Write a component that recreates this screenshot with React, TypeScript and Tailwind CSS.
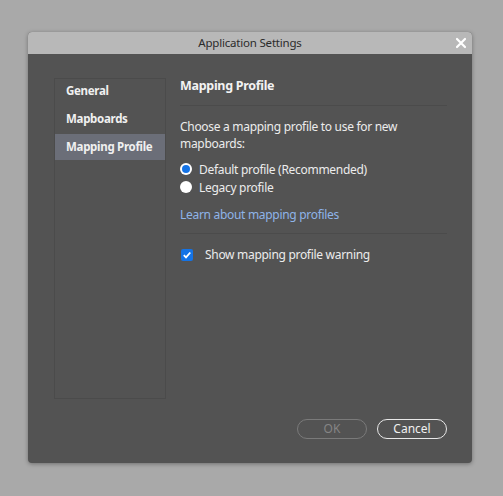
import { useState } from "react";

const font = { fontFamily: "'Noto Sans', 'Open Sans', sans-serif" };

export default function App() {
  const [profile, setProfile] = useState("default");
  const [warn, setWarn] = useState(true);
  const tabs = ["General", "Mapboards", "Mapping Profile"];
  const [tab, setTab] = useState("Mapping Profile");

  return (
    <div className="h-[496px] w-[503px] bg-[#a9a9a9] pl-[28px] pt-[32px]" style={font}>
      <div className="flex h-[431px] w-[444px] flex-col overflow-hidden rounded-[4px] bg-[#535353] shadow-[0_1px_4px_rgba(0,0,0,0.35)]">
        <div className="relative flex h-[22px] items-center justify-center bg-[#b8b8b8] text-[11.5px] tracking-[-0.2px] text-[#2b2b2b]">
          Application Settings
          <button className="absolute right-[5px] top-[5px]">
            <svg width="12" height="12" viewBox="0 0 12 12">
              <path d="M2 2 L10 10 M10 2 L2 10" stroke="#fff" strokeWidth="2.2" strokeLinecap="round" />
            </svg>
          </button>
        </div>

        <div className="flex flex-1 flex-col pb-[24px] pl-[26px] pr-[25px] pt-[24px]">
          <div className="flex flex-1 gap-[14px]">
            <div className="h-[321px] w-[112px] border border-[#4b4b4b]">
              <div className="-mt-[1px] flex flex-col gap-[2px]">
                {tabs.map((t) => (
                  <button
                    key={t}
                    onClick={() => setTab(t)}
                    className={`flex h-[26px] items-center whitespace-nowrap px-[11px] text-left text-[11.5px] font-bold tracking-[-0.3px] text-[#f0f0f0] ${
                      tab === t ? "bg-[#6b6e78]" : ""
                    }`}
                  >
                    {t}
                  </button>
                ))}
              </div>
            </div>

            <div className="flex flex-1 flex-col text-[12px] leading-[17px] tracking-[-0.3px] text-[#ececec]">
              <h2 className="-mt-[1px] text-[12.5px] font-bold tracking-[-0.3px] text-[#f2f2f2]">Mapping Profile</h2>
              <div className="mt-[11px] border-t border-[#4b4b4b]" />
              <p className="mt-[12px]">
                Choose a mapping profile to use for new
                <br />
                mapboards:
              </p>
              <div className="mt-[8px] flex flex-col">
                {[
                  ["default", "Default profile (Recommended)"],
                  ["legacy", "Legacy profile"],
                ].map(([v, label]) => (
                  <label
                    key={v}
                    className="flex h-[18px] cursor-pointer items-center gap-[7px]"
                    onClick={() => setProfile(v)}
                  >
                    <span className="flex h-[12px] w-[12px] items-center justify-center rounded-full bg-white">
                      {profile === v && <span className="h-[8px] w-[8px] rounded-full bg-[#1473e6]" />}
                    </span>
                    <span>{label}</span>
                  </label>
                ))}
              </div>
              <a className="mt-[10px] text-[#8fb4e8]" href="#">
                Learn about mapping profiles
              </a>
              <div className="mt-[10px] border-t border-[#4b4b4b]" />
              <label
                className="mt-[12px] flex cursor-pointer items-center gap-[12px] pl-[1px]"
                onClick={() => setWarn(!warn)}
              >
                <span
                  className={`flex h-[12px] w-[12px] items-center justify-center rounded-[2px] ${
                    warn ? "bg-[#1473e6]" : "bg-white"
                  }`}
                >
                  {warn && (
                    <svg width="10" height="10" viewBox="0 0 10 10">
                      <path d="M1.8 5.2 L4 7.4 L8.3 2.5" fill="none" stroke="#fff" strokeWidth="1.8" />
                    </svg>
                  )}
                </span>
                <span>Show mapping profile warning</span>
              </label>
            </div>
          </div>

          <div className="flex justify-end gap-[10px]">
            <button
              disabled
              className="h-[20px] w-[70px] rounded-full border border-[#7a7a7a] text-[12px] leading-none text-[#858585]"
            >
              OK
            </button>
            <button className="h-[20px] w-[70px] rounded-full border border-[#e8e8e8] text-[12px] leading-none text-[#f0f0f0]">
              Cancel
            </button>
          </div>
        </div>
      </div>
    </div>
  );
}
